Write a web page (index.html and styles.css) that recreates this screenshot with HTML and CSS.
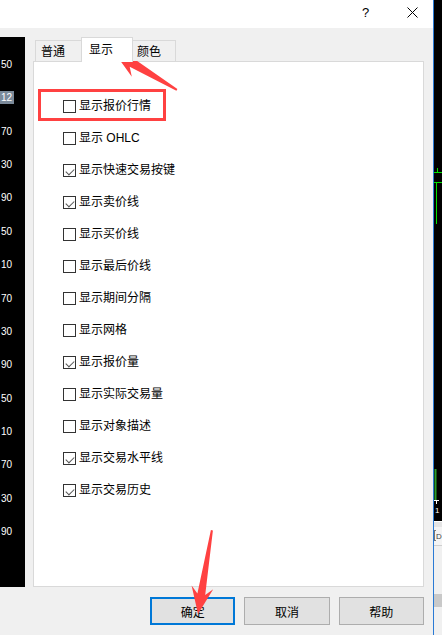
FILE: index.html
```html
<!DOCTYPE html>
<html>
<head>
  <meta charset="utf-8">
  <title>属性 - 显示</title>
  <link rel="stylesheet" href="styles.css">
</head>
<body>
  <div class="screen">
    <div class="dialog">
      <div class="titlebar">
        <span class="help">?</span>
        <span class="close">
          <svg width="11" height="11" viewBox="0 0 11 11"><path d="M0.5 0.5 L10.5 10.5 M10.5 0.5 L0.5 10.5" stroke="#000" stroke-width="1"/></svg>
        </span>
      </div>

      <div class="body">
        <!-- 背后图表的价格刻度 -->
        <div class="chart-left">
          <span class="price">50</span>
          <span class="price"><b class="mark">12</b></span>
          <span class="price">70</span>
          <span class="price">30</span>
          <span class="price">90</span>
          <span class="price">50</span>
          <span class="price">10</span>
          <span class="price">70</span>
          <span class="price">30</span>
          <span class="price">90</span>
          <span class="price">50</span>
          <span class="price">10</span>
          <span class="price">70</span>
          <span class="price">30</span>
          <span class="price">90</span>
        </div>

        <div class="content">
          <div class="tabs">
            <div class="tab tab-first">普通</div>
            <div class="tab active">显示</div>
            <div class="tab tab-last">颜色</div>
          </div>

          <div class="panel">
            <div class="check"><span class="box"></span>显示报价行情</div>
            <div class="check"><span class="box"></span>显示 OHLC</div>
            <div class="check"><span class="box on"></span>显示快速交易按键</div>
            <div class="check"><span class="box on"></span>显示卖价线</div>
            <div class="check"><span class="box"></span>显示买价线</div>
            <div class="check"><span class="box"></span>显示最后价线</div>
            <div class="check"><span class="box"></span>显示期间分隔</div>
            <div class="check"><span class="box"></span>显示网格</div>
            <div class="check"><span class="box on"></span>显示报价量</div>
            <div class="check"><span class="box"></span>显示实际交易量</div>
            <div class="check"><span class="box"></span>显示对象描述</div>
            <div class="check"><span class="box on"></span>显示交易水平线</div>
            <div class="check"><span class="box on"></span>显示交易历史</div>
          </div>

          <div class="buttons">
            <button class="btn default">确定</button>
            <button class="btn">取消</button>
            <button class="btn">帮助</button>
          </div>
        </div>
      </div>
    </div>

    <div class="chart-right">
      <svg width="8" height="635" viewBox="0 0 8 635">
        <rect x="0" y="0" width="8" height="521" fill="#000"/>
        <path d="M0 172.5 H8 M3.5 168 V172 M0 182.5 H8 M2.5 182 V224" stroke="#00e000" stroke-width="1"/>
        <path d="M1.5 469 V500" stroke="#2a9d2a" stroke-width="2"/>
        <path d="M0 500.5 H5 M2.5 500 V504" stroke="#fff" stroke-width="1"/>
        <text x="1" y="513" fill="#fff" font-size="8" font-family="Liberation Sans, sans-serif">1</text>
        <rect x="0" y="521" width="8" height="1" fill="#fff"/>
        <rect x="0" y="522" width="8" height="5" fill="#e4e4e4"/>
        <rect x="0" y="527" width="8" height="18" fill="#f4f4f4"/>
        <path d="M0.5 530 V541 M0.5 530.5 H2 M0.5 540.5 H2" stroke="#777" stroke-width="1"/>
        <text x="2" y="539" fill="#444" font-size="8" font-family="Liberation Sans, sans-serif">D</text>
        <rect x="0" y="545" width="8" height="1" fill="#cfcfcf"/>
        <rect x="0" y="546" width="8" height="48" fill="#f0f0f0"/>
        <rect x="0" y="594" width="8" height="13" fill="#c9c9c9"/>
        <rect x="0" y="607" width="8" height="28" fill="#f0f0f0"/>
      </svg>
    </div>
  </div>

  <!-- 标注：红框和箭头 -->
  <svg class="marks" width="442" height="635" viewBox="0 0 442 635">
    <rect x="39.5" y="90.5" width="125" height="29" fill="none" stroke="#ff4141" stroke-width="3"/>
    <polygon fill="#ff4141" points="114,52 144.2,56.1 134.3,58.9 177.4,89 176.4,90.8 129.7,66.7 131.8,76.7"/>
    <polygon fill="#ff4141" points="198,614 213.2,589.2 205.2,595 212.9,530.4 210.9,530 197.4,593.6 191.6,585.6"/>
  </svg>
</body>
</html>
```

FILE: styles.css
```css
/* 对话框整体 */
body {
  margin: 0;
  font-family: "Liberation Sans", "Noto Sans CJK SC", sans-serif;
  font-size: 12px;
  color: #000;
}
.screen {
  display: flex;
  width: 442px;
  height: 635px;
  overflow: hidden;
  position: relative;
}
.dialog {
  width: 433px;
  background: #f0f0f0;
  display: flex;
  flex-direction: column;
}
.titlebar {
  height: 28px;
  background: #fff;
  display: flex;
  align-items: center;
}
.titlebar .help {
  margin-left: 362px;
  font-size: 13px;
  line-height: 13px;
  margin-top: -4px;
}
.titlebar .close {
  margin-left: 38px;
  height: 11px;
  margin-top: -3px;
}
.body {
  flex: 1;
  display: flex;
  align-items: flex-start;
}

/* 左侧图表刻度 */
.chart-left {
  width: 25px;
  height: 550px;
  margin-top: 9px;
  background: #000;
  color: #fff;
  padding-top: 11px;
  box-sizing: border-box;
  display: flex;
  flex-direction: column;
  font-size: 10px;
}
.price {
  height: 33.36px;
  line-height: 33.36px;
  padding-left: 1px;
}
.mark {
  font-weight: normal;
  display: inline-block;
  background: #7b8a9a;
  line-height: 13px;
  height: 13px;
  margin-left: -1px;
  padding: 0 2px 0 1px;
}

/* 标签页 */
.content {
  margin-left: 8px;
  width: 391px;
  padding-top: 9px;
}
.tabs {
  display: flex;
  align-items: flex-end;
  height: 25px;
  margin-bottom: -1px;
  padding-left: 2px;
  position: relative;
  z-index: 1;
}
.tab {
  box-sizing: border-box;
  height: 21px;
  line-height: 19px;
  margin-bottom: 1px;
  border-top: 1px solid #d9d9d9;
  background: #f0f0f0;
  font-family: "Noto Sans CJK SC", sans-serif;
}
.tab-first {
  width: 46px;
  border-left: 1px solid #d9d9d9;
  padding-left: 5px;
}
.tab-last {
  width: 43px;
  border-right: 1px solid #d9d9d9;
  padding-left: 4px;
}
.tab.active {
  width: 52px;
  height: 25px;
  margin-bottom: 0;
  line-height: 19px;
  padding-left: 7px;
  padding-top: 1px;
  background: #fff;
  border-left: 1px solid #d9d9d9;
  border-right: 1px solid #d9d9d9;
}

/* 选项面板 */
.panel {
  box-sizing: border-box;
  height: 526px;
  background: #fff;
  border: 1px solid #d9d9d9;
  padding: 28px 0 0 29px;
}
.check {
  height: 32px;
  display: flex;
  align-items: center;
  line-height: 14px;
}
.box {
  box-sizing: border-box;
  width: 13px;
  height: 13px;
  border: 1px solid #333;
  background: #fff;
  margin-right: 3px;
  flex-shrink: 0;
  position: relative;
}
.box.on::after {
  content: "";
  position: absolute;
  top: 2px;
  left: 1.5px;
  width: 7px;
  height: 4px;
  border-left: 1.3px solid #555;
  border-bottom: 1.3px solid #555;
  transform: rotate(-45deg) translate(-1px, 1px);
  transform-origin: center;
}

/* 底部按钮 */
.buttons {
  display: flex;
  gap: 9px;
  margin-top: 10px;
  padding-left: 117px;
}
.btn {
  box-sizing: border-box;
  width: 86px;
  height: 28px;
  background: #e1e1e1;
  border: 1px solid #adadad;
  font-family: "Noto Sans CJK SC", sans-serif;
  font-size: 12px;
  color: #000;
  padding: 0;
}
.btn.default {
  border: 2px solid #0078d7;
}

/* 右侧图表边缘 */
.chart-right {
  width: 8px;
  border-left: 1px solid #2a7ad4;
  line-height: 0;
}

/* 标注层 */
.marks {
  position: absolute;
  left: 0;
  top: 0;
  pointer-events: none;
}
```
